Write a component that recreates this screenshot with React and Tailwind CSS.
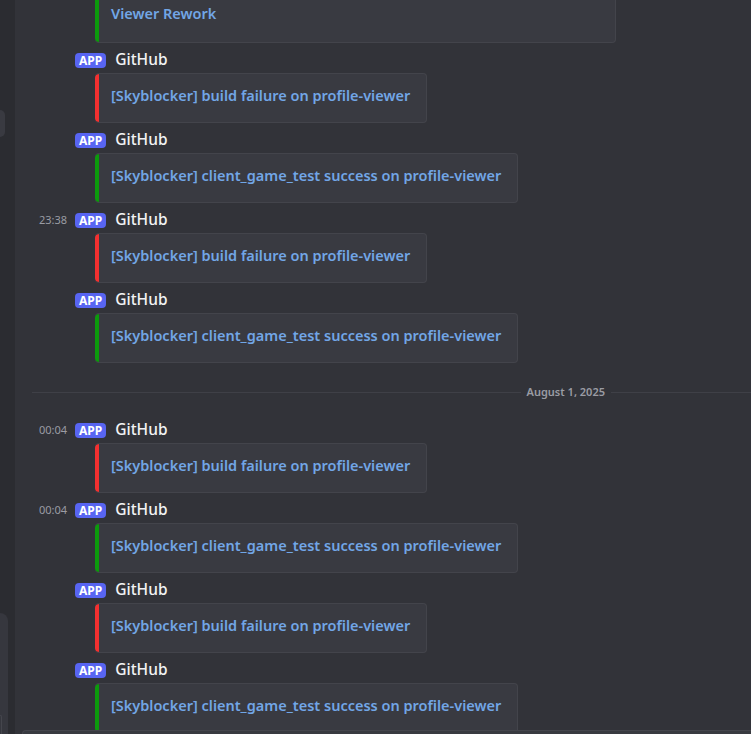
import React from "react";

const FAIL = "[Skyblocker] build failure on profile-viewer";
const OK = "[Skyblocker] client_game_test success on profile-viewer";

const before = [
  { time: "", text: FAIL, color: "bg-[#f23030]" },
  { time: "", text: OK, color: "bg-[#0c9a0c]" },
  { time: "23:38", text: FAIL, color: "bg-[#f23030]" },
  { time: "", text: OK, color: "bg-[#0c9a0c]" },
];

const after = [
  { time: "00:04", text: FAIL, color: "bg-[#f23030]" },
  { time: "00:04", text: OK, color: "bg-[#0c9a0c]" },
  { time: "", text: FAIL, color: "bg-[#f23030]" },
  { time: "", text: OK, color: "bg-[#0c9a0c]" },
];

const Embed = ({ color, children, lead = "leading-[18px]" }) => (
  <div className="flex rounded-[4px] border border-[#43444b] border-l-0 bg-[#393a41] overflow-hidden">
    <div className={`w-[4px] shrink-0 rounded-l-[4px] ${color}`} />
    <div className={`pl-[12px] pr-[16px] pt-[12px] pb-[18px] text-[14.5px] font-semibold text-[#72a6e6] ${lead}`}>
      {children}
    </div>
  </div>
);

const Message = ({ time, text, color }) => (
  <div className="flex pt-[6px]">
    <div className="w-[60px] shrink-0 pr-[8px] h-[22px] flex items-center justify-end text-[11px] text-[#9a9ca4]">
      {time}
    </div>
    <div className="flex flex-col">
      <div className="h-[22px] flex items-center gap-[9px]">
        <span className="h-[15px] px-[4px] rounded-[4px] bg-[#5865f2] text-white text-[12px] leading-[15px] font-bold">
          APP
        </span>
        <span className="text-[15.5px] font-medium text-[#f2f3f5]">GitHub</span>
      </div>
      <div className="mt-[2px] ml-[20px] self-start">
        <Embed color={color}>{text}</Embed>
      </div>
    </div>
  </div>
);

export default function App() {
  return (
    <div
      className="w-[751px] h-[734px] overflow-hidden flex bg-[#323339]"
      style={{ fontFamily: '"Noto Sans", "Open Sans", sans-serif' }}
    >
      {/* server/channel sidebar edge */}
      <div className="w-[15px] shrink-0 bg-[#2b2c31] flex flex-col">
        <div className="mt-[110px] h-[27px] w-[5px] rounded-r-[8px] bg-[#393a41]" />
        <div className="mt-[476px] flex-1 w-[8px] rounded-tr-[8px] bg-[#36373e] flex flex-col justify-end">
          <div className="h-[19px] w-[2px] rounded-tr-[4px] border-t border-r border-[#45464d]" />
        </div>
      </div>

      <div className="flex-1 flex flex-col min-w-0">
        <div className="flex-1 overflow-hidden">
          <div className="-mt-[33px]">
            <div className="flex">
              <div className="w-[80px] shrink-0" />
              <div className="w-[521px]">
                <Embed color="bg-[#0c9a0c]" lead="leading-[22px]">
                  <div>[Skyblocker] pull request opened: #1342 Profile</div>
                  <div>Viewer Rework</div>
                </Embed>
              </div>
            </div>
            {before.map((m, i) => (
              <Message key={i} {...m} />
            ))}
            <div className="h-[50px] pt-[8px] flex items-center pl-[17px]">
              <div className="flex-1 h-px bg-[#3f4047]" />
              <span className="px-[6px] text-[11px] font-semibold text-[#9a9ca4]">
                August 1, 2025
              </span>
              <div className="w-[140px] h-px bg-[#3f4047]" />
            </div>
            {after.map((m, i) => (
              <Message key={i} {...m} />
            ))}
          </div>
        </div>
        <div className="h-[4px] ml-[7px] rounded-tl-[8px] bg-[#383a40] border-t border-l border-[#44454c]" />
      </div>
    </div>
  );
}
